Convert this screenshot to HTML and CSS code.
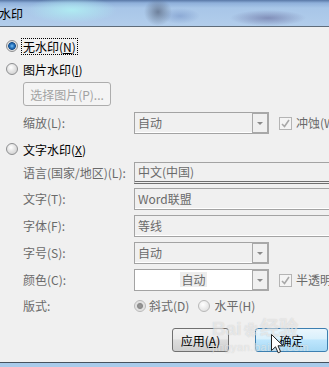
FILE: index.html
```html
<!DOCTYPE html>
<html lang="zh-CN">
  <head>
    <meta charset="UTF-8" />
    <title>水印</title>
    <link rel="stylesheet" href="styles.css">
  </head>
  <body>
    <div class="titlebar"><span class="title">水印</span></div>
    <div class="dialog">
      <div class="opt-row">
        <span class="radio on"></span>
        <span class="opt-label focus">无水印(<u>N</u>)</span>
      </div>
      <div class="opt-row gap5">
        <span class="radio"></span>
        <span class="opt-label">图片水印(<u>I</u>)</span>
      </div>
      <div class="indent gap4">
        <button type="button" class="btn-pick">选择图片(P)...</button>
      </div>
      <div class="field-row gap6">
        <span class="field-label">缩放(L):</span>
        <div class="combo">
          <span class="combo-text">自动</span>
          <span class="drop"></span>
        </div>
        <span class="check"><svg width="11" height="11" viewBox="0 0 11 11"><path d="M2 6 L4.5 8.5 L9 2" fill="none" stroke="#a8a8a8" stroke-width="1.6"/></svg></span>
        <span class="check-label">冲蚀(W)</span>
      </div>
      <div class="opt-row gap6">
        <span class="radio"></span>
        <span class="opt-label">文字水印(<u>X</u>)</span>
      </div>
      <div class="field-row gap4">
        <span class="field-label">语言(国家/地区)(L):</span>
        <div class="text-field lang">中文(中国)</div>
      </div>
      <div class="field-row gap4">
        <span class="field-label">文字(T):</span>
        <div class="text-field">Word联盟</div>
      </div>
      <div class="field-row gap5">
        <span class="field-label">字体(F):</span>
        <div class="text-field">等线</div>
      </div>
      <div class="field-row gap5">
        <span class="field-label">字号(S):</span>
        <div class="combo">
          <span class="combo-text">自动</span>
          <span class="drop"></span>
        </div>
      </div>
      <div class="field-row gap5">
        <span class="field-label">颜色(C):</span>
        <div class="combo">
          <span class="combo-text color-pick"><span class="auto">自动</span></span>
          <span class="drop"></span>
        </div>
        <span class="check"><svg width="11" height="11" viewBox="0 0 11 11"><path d="M2 6 L4.5 8.5 L9 2" fill="none" stroke="#a8a8a8" stroke-width="1.6"/></svg></span>
        <span class="check-label">半透明(E)</span>
      </div>
      <div class="field-row layout-row gap6">
        <span class="field-label">版式:</span>
        <span class="radio dim on"></span>
        <span class="dim-label">斜式(D)</span>
        <span class="radio dim second"></span>
        <span class="dim-label">水平(H)</span>
      </div>
      <div class="actions">
        <button type="button" class="btn">应用(<u>A</u>)</button>
        <button type="button" class="btn btn-hot">确定</button>
      </div>
    </div>
    <div class="taskbar"></div>

    <div class="watermark">
      <div class="wm-big">Bai<span class="paw">❀</span>经验</div>
      <div class="wm-small">jingyan.baidu.com</div>
    </div>
    <svg class="cursor" width="13" height="20" viewBox="0 0 13 20">
      <path d="M0.5 0.5 L0.5 16.5 L4.5 12.8 L7.2 18.8 L9.6 17.7 L7 11.8 L12 11.8 Z" fill="#fff" stroke="#222" stroke-width="1"/>
    </svg>
  </body>
</html>
```

FILE: styles.css
```css
* {
  box-sizing: border-box;
}
html,
body {
  margin: 0;
  padding: 0;
}
body {
  width: 329px;
  height: 367px;
  overflow: hidden;
  position: relative;
  font-family: "Noto Sans CJK SC", "Microsoft YaHei", sans-serif;
  font-size: 12px;
  line-height: 16px;
  color: #000;
  background: #f0f0f0;
}
.titlebar {
  height: 27px;
  border-bottom: 1px solid #5f6c7a;
  display: flex;
  align-items: center;
  background:
    radial-gradient(ellipse 14px 14px at 158px 12px, rgba(90, 105, 130, 0.75), transparent),
    radial-gradient(ellipse 38px 8px at 268px 18px, rgba(110, 118, 165, 0.7), transparent),
    radial-gradient(ellipse 20px 8px at 180px 16px, rgba(120, 150, 200, 0.6), transparent),
    radial-gradient(ellipse 45px 13px at 72px 10px, rgba(175, 236, 242, 0.95), transparent),
    linear-gradient(#5877a6 0, #8fb0da 3px, #a8c6e8 8px, #b2cdeb 26px);
}
.title {
  margin-left: -1px;
  margin-top: 1px;
}
.dialog {
  height: 336px;
  padding: 10px 0 0 6px;
  border-bottom: 1px solid #46525e;
  background: #f0f0f0;
}
.gap4 {
  margin-top: 4px;
}
.gap5 {
  margin-top: 5px;
}
.gap6 {
  margin-top: 6px;
}
.opt-row {
  display: flex;
  align-items: center;
  height: 18px;
  white-space: nowrap;
}
.radio {
  flex: none;
  width: 12px;
  height: 12px;
  margin-right: 3px;
  border-radius: 50%;
  border: 1px solid #8e8f91;
  background: radial-gradient(circle at 40% 35%, #ffffff 0, #e4e4e4 45%, #c9c9c9 100%);
}
.radio.on {
  background: radial-gradient(circle at 50% 50%, #7cc4f2 0, #2a78c4 2px, #154f8c 3.5px, #dcdcdc 4.2px, #f6f6f6 100%);
}
.opt-label {
  display: inline-block;
  border: 1px dotted transparent;
  padding: 0 1px;
  line-height: 15px;
}
.opt-label.focus {
  border-color: #000;
}
.indent {
  padding-left: 17px;
}
.btn-pick {
  display: block;
  width: 88px;
  height: 24px;
  padding: 0;
  border: 1px solid #adadad;
  border-radius: 3px;
  background: #f4f4f4;
  color: #a2a2a2;
  font-family: inherit;
  font-size: 12px;
}
.field-row {
  display: flex;
  align-items: center;
  height: 22px;
  padding-left: 17px;
  white-space: nowrap;
}
.field-label {
  flex: none;
  width: 111px;
  color: #6a6a6a;
}
.combo {
  flex: none;
  display: flex;
  width: 135px;
  height: 22px;
  border: 1px solid #a3a3a3;
  background: #f0f0f0;
  box-shadow: inset 0 -1px 0 #fff;
}
.combo-text {
  flex: 1;
  padding-left: 3px;
  line-height: 19px;
  color: #6a6a6a;
}
.drop {
  flex: none;
  width: 17px;
  margin: -1px -1px -1px 0;
  border: 2px solid #a8a8a8;
  border-left-width: 1px;
  background: #f0f0f0;
  display: flex;
  align-items: center;
  justify-content: center;
}
.drop::after {
  content: "";
  border-left: 3px solid transparent;
  border-right: 3px solid transparent;
  border-top: 3px solid #8a8a8a;
}
.color-pick {
  background: #fff;
  padding-left: 0;
  text-align: center;
}
.auto {
  display: inline-block;
  padding: 0 1px;
  line-height: 15px;
  background: #ededed;
}
.check {
  flex: none;
  width: 13px;
  height: 13px;
  margin-left: 10px;
  margin-right: 4px;
  border: 1px solid #b4b4b4;
  background: #f4f4f4;
  display: flex;
  align-items: center;
  justify-content: center;
}
.check-label {
  color: #6a6a6a;
}
.text-field {
  flex: none;
  width: 230px;
  height: 22px;
  padding-left: 3px;
  border: 1px solid #a3a3a3;
  border-right: none;
  background: #f0f0f0;
  box-shadow: inset 0 -1px 0 #fff;
  color: #6a6a6a;
  line-height: 19px;
}
.text-field.lang {
  height: 22px;
  border-bottom: 3px double #6f6f6f;
  box-shadow: none;
  line-height: 17px;
}
.layout-row {
  height: 18px;
}
.radio.dim {
  border-color: #b8b8b8;
  background: radial-gradient(circle at 40% 35%, #ffffff 0, #ececec 50%, #dadada 100%);
}
.radio.dim.on {
  background: radial-gradient(circle at 50% 50%, #9a9a9a 0, #8a8a8a 2.5px, #dedede 3.5px, #f4f4f4 100%);
}
.radio.dim.second {
  margin-left: 9px;
  margin-right: 4px;
}
.dim-label {
  color: #6a6a6a;
}
.actions {
  display: flex;
  gap: 26px;
  margin-top: 13px;
  padding-left: 166px;
}
.btn {
  width: 57px;
  height: 24px;
  padding: 0;
  border: 1px solid #707070;
  border-radius: 3px;
  background: linear-gradient(#f2f2f2 0, #ebebeb 45%, #dddddd 50%, #cfcfcf 100%);
  font-family: inherit;
  font-size: 12px;
  color: #000;
}
.btn-hot {
  width: 73px;
  border-color: #3c7fb1;
  background: linear-gradient(#eaf6fd 0, #d9f0fc 45%, #bee6fd 50%, #a7d9f5 100%);
}
.taskbar {
  height: 4px;
  background: #a9cbea;
}
.watermark {
  position: absolute;
  left: 212px;
  top: 318px;
  color: rgba(255, 255, 255, 0.55);
  text-shadow: 0 0 1px rgba(120, 120, 120, 0.35);
  pointer-events: none;
}
.wm-big {
  font-family: "Liberation Sans", sans-serif;
  font-size: 19px;
  font-weight: bold;
  line-height: 22px;
}
.paw {
  font-size: 14px;
  margin: 0 2px;
}
.wm-small {
  font-family: "Liberation Sans", sans-serif;
  font-size: 11px;
  line-height: 12px;
  letter-spacing: 0.5px;
}
.cursor {
  position: absolute;
  left: 271px;
  top: 334px;
}
```
